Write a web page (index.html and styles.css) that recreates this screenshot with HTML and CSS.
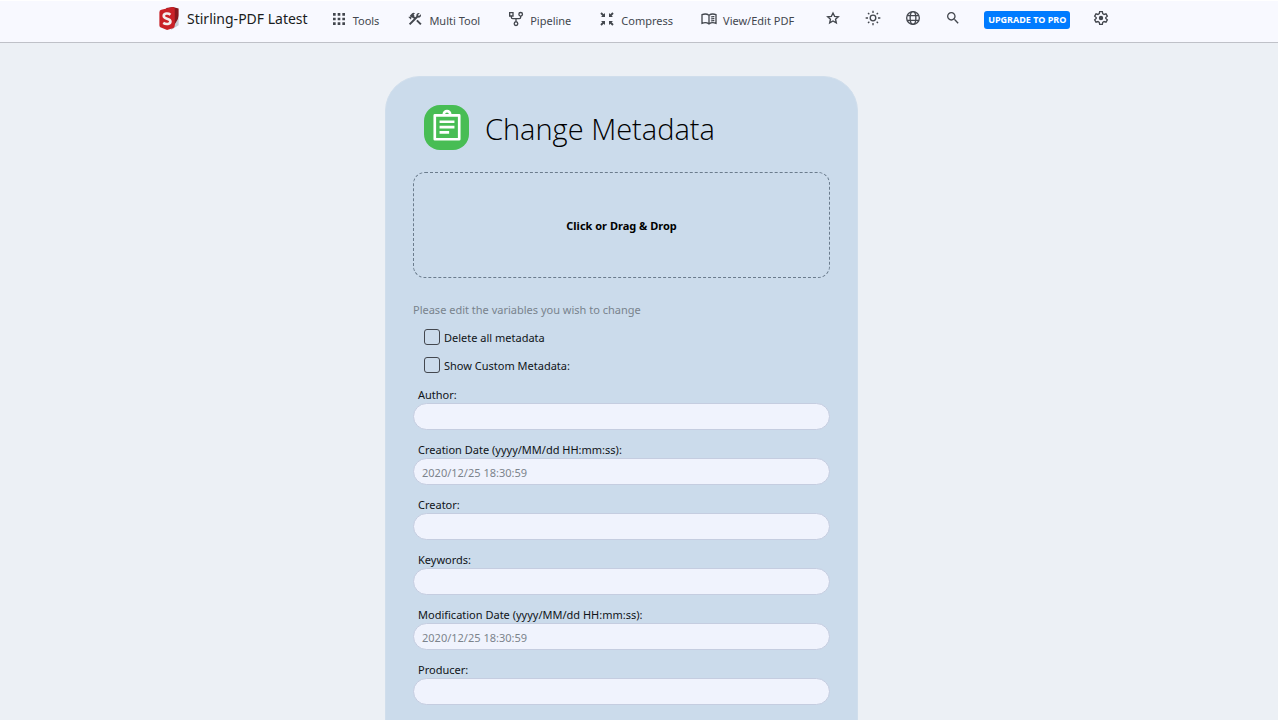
FILE: index.html
```html
<!DOCTYPE html>
<html lang="en">
<head>
<meta charset="utf-8">
<meta name="viewport" content="width=device-width, initial-scale=1">
<title>Change Metadata</title>
<link rel="stylesheet" href="styles.css">
</head>
<body>
<header class="navbar">
  <nav class="nav-inner">
    <a class="brand" href="#">
      <svg class="brand-logo" viewBox="0 0 22 26"><path fill="#c5cbd2" d="M13 12 21 10v10l-8 5z"/><path fill="#86181d" d="m8 2 7-1 6 1.500v7q0 4-3 8l-4 6z"/><path fill="#c92127" d="M1 6.500q0-2 2-2.500l12-3q2 0 2 2v17q0 3-3 3.500l-5 1.500-7-3q-1-.5-1-2z"/><path fill="none" stroke="#f4eeee" stroke-width="2.700" d="M12.500 9C10 7 5.500 7.500 5.500 10.500c0 3.500 7 2 7 5.500 0 3-4.500 3.500-7.500 1.500"/></svg>
      <span>Stirling-PDF Latest</span>
    </a>
    <div class="nav-links">
      <a class="nav-link" href="#"><svg class="icon" viewBox="0 0 24 24"><path d="M3 3h4v4H3zM10 3h4v4h-4zM17 3h4v4h-4zM3 10h4v4H3zM10 10h4v4h-4zM17 10h4v4h-4zM3 17h4v4H3zM10 17h4v4h-4zM17 17h4v4h-4z"/></svg><span>Tools</span></a>
      <a class="nav-link" href="#"><svg class="icon" viewBox="0 0 24 24"><path d="m13.783 15.172 2.121-2.121 5.996 5.996-2.121 2.121zM17.500 10c1.930 0 3.500-1.570 3.500-3.500 0-.58-.16-1.120-.41-1.600l-2.700 2.700-1.490-1.490 2.700-2.700c-.48-.25-1.020-.41-1.600-.41C15.570 3 14 4.570 14 6.500c0 .41.08.8.21 1.160l-1.850 1.850-1.780-1.780.71-.71-1.410-1.410L12 3.490c-1.170-1.170-3.070-1.170-4.240 0L4.220 7.030l1.410 1.410H2.810l-.71.71 3.540 3.540.71-.71V9.150l1.410 1.410.71-.71 1.780 1.780-7.410 7.410 2.120 2.120L16.340 9.790c.36.13.75.21 1.160.21z"/></svg><span>Multi Tool</span></a>
      <a class="nav-link" href="#"><svg class="icon line" viewBox="0 0 24 24"><path d="M2.500 2.500h5v5h-5zM5 7.500V9.500q0 2 2 2h10q2 0 2-2V7.500M12 11.500v5"/><circle cx="19" cy="5" r="2.700"/><circle cx="12" cy="19" r="2.700"/></svg><span>Pipeline</span></a>
      <a class="nav-link" href="#"><svg class="icon" viewBox="0 0 24 24"><path d="M9 9H3l2-2-3-3 2-2 3 3 2-2zM15 9h6l-2-2 3-3-2-2-3 3-2-2zM9 15H3l2 2-3 3 2 2 3-3 2 2zM15 15h6l-2 2 3 3-2 2-3-3-2 2z"/></svg><span>Compress</span></a>
      <a class="nav-link" href="#"><svg class="icon line" viewBox="0 0 24 24"><path d="M12 6.500C9 4.200 5 4.200 1.500 5.500v13c3.500-1.300 7.500-1.300 10.500 1 3-2.300 7-2.300 10.500-1v-13C19 4.200 15 4.200 12 6.500zm0 0v13M15 9c1.500-.7 3.200-.8 5-.5M15 12c1.500-.7 3.200-.8 5-.5M15 15c1.500-.7 3.200-.8 5-.5"/></svg><span>View/Edit PDF</span></a>
    </div>
    <div class="nav-tools">
      <button class="icon-button" type="button" aria-label="Favourites"><svg class="icon line" viewBox="0 0 24 24"><path d="m12 4.500 2.400 5 5.600.6-4.200 3.700 1.200 5.500-5-2.900-5 2.900 1.200-5.500L4 10.100l5.600-.6z"/></svg></button>
      <button class="icon-button" type="button" aria-label="Theme"><svg class="icon line" viewBox="0 0 24 24"><circle cx="12" cy="12" r="4.200"/><path d="M12 1v3.500M12 19.500V23M1 12h3.500M19.500 12H23M4.500 4.500l2 2M17.500 17.500l2 2M4.500 19.500l2-2M17.500 6.500l2-2"/></svg></button>
      <button class="icon-button" type="button" aria-label="Language"><svg class="icon line" viewBox="0 0 24 24"><circle cx="12" cy="12" r="9.500"/><ellipse cx="12" cy="12" rx="4.300" ry="9.500"/><path d="M3.500 8.500h17M3.500 15.500h17"/></svg></button>
      <button class="icon-button" type="button" aria-label="Search"><svg class="icon" viewBox="0 0 24 24"><path d="M15.500 14h-.79l-.28-.27C15.410 12.590 16 11.110 16 9.500 16 5.910 13.090 3 9.500 3S3 5.910 3 9.500 5.910 16 9.500 16c1.610 0 3.090-.59 4.230-1.570l.27.28v.79l5 4.990L20.490 19l-4.990-5zm-6 0C7.010 14 5 11.990 5 9.500S7.010 5 9.500 5 14 7.010 14 9.500 11.990 14 9.500 14z"/></svg></button>
    </div>
    <a class="upgrade" href="#">UPGRADE TO PRO</a>
    <button class="icon-button" type="button" aria-label="Settings"><svg class="icon line" viewBox="0 0 24 24"><path d="M10 2.500h4l.6 3 2 1.200 2.900-1 2 3.500-2.300 2v1.600l2.300 2-2 3.500-2.900-1-2 1.200-.6 3h-4l-.6-3-2-1.200-2.900 1-2-3.500 2.300-2v-1.600l-2.300-2 2-3.500 2.900 1 2-1.200z"/><circle cx="12" cy="12" r="2.300" fill="currentColor"/></svg></button>
  </nav>
</header>
<main class="page">
  <form class="card">
    <div class="card-header">
      <span class="tool-icon"><svg viewBox="0 0 32 32"><path d="M4.500 6h23v22.500h-23zM9 12h14M9 17h14M9 22h9"/><path d="M13 5a3 3 0 0 1 6 0"/></svg></span>
      <h1>Change Metadata</h1>
    </div>
    <button class="dropzone" type="button">Click or Drag &amp; Drop</button>
    <p class="hint">Please edit the variables you wish to change</p>
    <div class="check"><input type="checkbox" id="delete-all"><label for="delete-all">Delete all metadata</label></div>
    <div class="check"><input type="checkbox" id="custom"><label for="custom">Show Custom Metadata:</label></div>
    <div class="fields">
      <div class="field"><label for="author">Author:</label><input type="text" id="author"></div>
      <div class="field"><label for="created">Creation Date (yyyy/MM/dd HH:mm:ss):</label><input type="text" id="created" placeholder="2020/12/25 18:30:59"></div>
      <div class="field"><label for="creator">Creator:</label><input type="text" id="creator"></div>
      <div class="field"><label for="keywords">Keywords:</label><input type="text" id="keywords"></div>
      <div class="field"><label for="modified">Modification Date (yyyy/MM/dd HH:mm:ss):</label><input type="text" id="modified" placeholder="2020/12/25 18:30:59"></div>
      <div class="field"><label for="producer">Producer:</label><input type="text" id="producer"></div>
    </div>
  </form>
</main>
</body>
</html>
```
FILE: styles.css
```css
* { box-sizing: border-box; }
html { background: #fff; }
body {
  margin: 1px 2px 0 0;
  background: #ecf0f5;
  color: #101418;
  font-family: "Noto Sans", "Open Sans", sans-serif;
  font-size: 11px;
}
a { color: inherit; text-decoration: none; }
button, input { font: inherit; color: inherit; }

.navbar { background: #f8f9ff; border-bottom: 1px solid #bfc1c8; }
.nav-inner {
  display: flex;
  align-items: center;
  max-width: 962px;
  height: 41px;
  margin: 0 auto;
  padding-bottom: 7px;
  color: #43474e;
}
.brand { display: flex; align-items: center; gap: 7px; margin-right: 23px; color: #191c20; font-size: 14px; white-space: nowrap; }
.brand-logo { width: 22px; height: 25px; }
.nav-links { display: flex; gap: 28px; margin-right: 31px; }
.nav-link { display: flex; align-items: center; gap: 6px; white-space: nowrap; }
.nav-link .icon { margin-top: 2px; }
.nav-link span { padding-top: 4px; }
.icon { display: block; width: 16px; height: 16px; fill: currentColor; }
.line { fill: none; stroke: currentColor; stroke-width: 2; }
.nav-tools { display: flex; gap: 24px; margin-right: 23px; }
.icon-button { padding: 0 0 1px; border: 0; background: none; }
.upgrade {
  margin: 4px 23px 0 0;
  padding: 0 4px;
  border-radius: 3px;
  background: #007bff;
  color: #fff;
  font-size: 9px;
  font-weight: 700;
  line-height: 18px;
  white-space: nowrap;
}

.page { display: flex; justify-content: center; padding: 33px 35px 0 0; }
.card {
  width: 100%;
  max-width: 473px;
  padding: 28px 27px;
  border: 1px solid #d0deec;
  border-radius: 35px 35px 0 0;
  background: #cbdbeb;
}
.card-header { display: flex; align-items: center; gap: 16px; padding: 0 11px; }
.tool-icon { display: grid; place-items: center; width: 45px; height: 45px; border-radius: 16px; background: #48bd54; }
.tool-icon svg { width: 34px; height: 34px; margin-bottom: 3px; fill: none; stroke: #fff; stroke-width: 2.5; stroke-linejoin: round; }
h1 { margin: 0; padding-top: 2px; font-family: "Open Sans", "Noto Sans", sans-serif; font-size: 29px; font-weight: 300; line-height: 43px; color: #000; white-space: nowrap; }
.dropzone {
  display: block;
  width: 100%;
  height: 106px;
  margin: 22px 0 24px;
  border: 1px dashed #6b7c8d;
  border-radius: 12px;
  background: none;
  color: #000;
  font-weight: 700;
}
.hint { margin: 0 0 10px; line-height: 16px; color: #79838d; }
.check { display: flex; align-items: center; gap: 4px; height: 16px; margin: 0 0 12px 11px; }
.hint + .check { margin-top: 11px; }
.check input { appearance: none; width: 16px; height: 16px; margin: 0; border: 1px solid #43474e; border-radius: 3px; }
.fields { display: grid; gap: 11px; margin-top: 13px; }
.field { display: grid; }
.field label { padding-left: 5px; line-height: 17px; }
.field input { width: 100%; height: 27px; padding: 1px 8px 0; border: 1px solid #c5cde0; border-radius: 14px; background: #f0f3fd; }
.field input::placeholder { color: #7c838c; opacity: 1; }
```
